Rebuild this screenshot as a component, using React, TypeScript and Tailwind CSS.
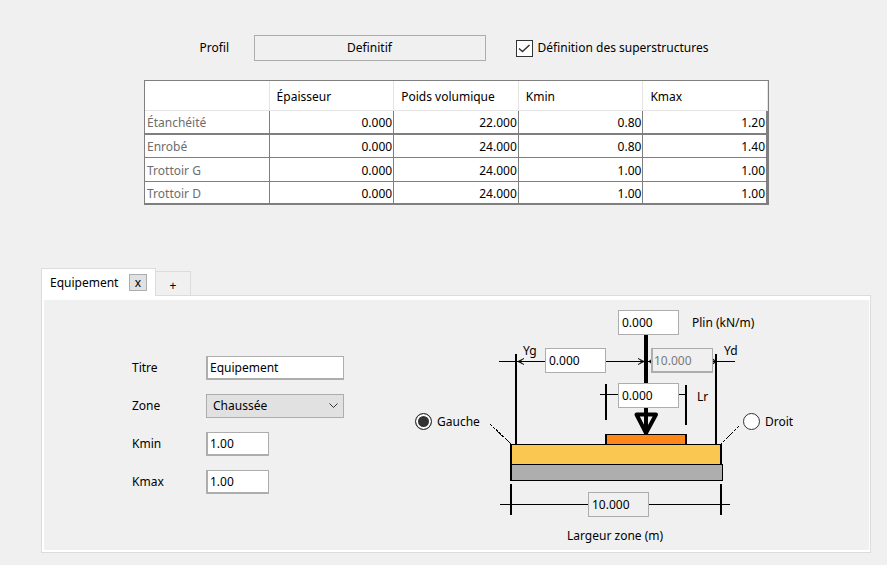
import { useState } from 'react';

const columns = ['Épaisseur', 'Poids volumique', 'Kmin', 'Kmax'];

const rows = [
  { name: 'Étanchéité', size: 'h-6', line: 'border-b-2', values: ['0.000', '22.000', '0.80', '1.20'] },
  { name: 'Enrobé', size: 'h-[23px]', line: 'border-b', values: ['0.000', '24.000', '0.80', '1.40'] },
  { name: 'Trottoir G', size: 'h-6', line: 'border-b', values: ['0.000', '24.000', '1.00', '1.00'] },
  { name: 'Trottoir D', size: 'h-[21px]', line: '', values: ['0.000', '24.000', '1.00', '1.00'] },
];

const field =
  'h-6 border border-b-2 border-l-2 border-[#adadad] bg-white pl-[2px] text-black outline-none';
const canvasField =
  'absolute h-[25px] w-[61px] border border-[#adadad] bg-white pl-[3px] text-black outline-none';
const disabledCanvasField =
  'absolute h-[25px] border border-[#adadad] bg-[#f0f0f0] outline-none';
const radio =
  'm-0 size-[17px] appearance-none rounded-full border border-[#333] bg-white checked:bg-[#333] checked:shadow-[inset_0_0_0_2px_white]';

function SuperstructureTable() {
  return (
    <table className="w-[625px] table-fixed border-separate border-spacing-0 border border-b-2 border-[#7f7f7f] bg-white">
      <thead>
        <tr className="h-[30px]">
          <td className="border-r border-b border-[#e5e5e5] p-0" />
          {columns.map((c) => (
            <th
              key={c}
              scope="col"
              className="border-r border-b border-[#e5e5e5] p-0 pt-[2px] pl-[7px] text-left font-normal"
            >
              {c}
            </th>
          ))}
        </tr>
      </thead>
      <tbody>
        {rows.map((row) => (
          <tr key={row.name} className={row.size}>
            <th
              scope="row"
              className={`${row.line} border-r border-[#7f7f7f] p-0 pt-[2px] pl-[2px] text-left font-normal text-[#6d6d6d]`}
            >
              {row.name}
            </th>
            {row.values.map((v, j) => (
              <td
                key={columns[j]}
                className={`${row.line} border-r border-[#7f7f7f] p-0 pt-[2px] pr-px text-right last:border-r-2`}
              >
                {v}
              </td>
            ))}
          </tr>
        ))}
      </tbody>
    </table>
  );
}

function LoadDiagram() {
  const [side, setSide] = useState('gauche');
  return (
    <div className="relative h-[240px] w-[380px] shrink-0">
      <svg
        viewBox="414 308 380 240"
        className="absolute inset-0 size-full"
        shapeRendering="crispEdges"
        aria-hidden="true"
      >
        {/* deck layers */}
        <rect x="510" y="464" width="213" height="17" fill="#000" />
        <rect x="512" y="465" width="210" height="15" fill="#aeaeae" />
        <rect x="510" y="444" width="212" height="20" fill="#000" />
        <rect x="512" y="445" width="208" height="19" fill="#fac751" />
        <rect x="605" y="434" width="82" height="10" fill="#000" />
        <rect x="607" y="435" width="78" height="9" fill="#ff861a" />
        {/* dimension lines */}
        <g fill="#000">
          <rect x="515" y="354" width="2" height="90" />
          <rect x="715" y="354" width="2" height="90" />
          <rect x="499" y="361" width="147" height="1" />
          <rect x="648" y="361" width="87" height="1" />
          <rect x="605" y="384" width="2" height="36" />
          <rect x="685" y="385" width="2" height="40" />
          <rect x="600" y="394" width="86" height="1" />
          <rect x="510" y="484" width="2" height="31" />
          <rect x="720" y="484" width="2" height="31" />
          <rect x="500" y="504" width="230" height="1" />
          <rect x="644" y="334" width="4" height="84" />
        </g>
        <g stroke="#000" fill="none" shapeRendering="auto">
          <path d="M524 358.500L518 361.500L524 364.500M521 360V363" />
          <path d="M638 358.500L644 361.500L638 364.500M641 360V363" />
          <path d="M652 359L649 361.500L652 364M651 360V363" />
          <path d="M713 359L716 361.500L713 364M714 360V363" />
          <path d="M646 412V434" strokeWidth="4" />
          <path d="M636.500 414.500H656L646 433Z" strokeWidth="4" strokeLinejoin="round" />
        </g>
        <g stroke="#000" fill="none" strokeDasharray="3 1">
          <path d="M490 424L511 444" />
          <path d="M739 426L721 444" />
        </g>
      </svg>

      <input id="plin" defaultValue="0.000" className={`${canvasField} top-[2px] left-[204px]`} />
      <label htmlFor="plin" className="absolute top-[7px] left-[278px]">Plin (kN/m)</label>

      <label htmlFor="yg" className="absolute top-[35px] left-[109px]">Yg</label>
      <input id="yg" defaultValue="0.000" className={`${canvasField} top-[40px] left-[131px]`} />

      <input
        id="yd"
        defaultValue="10.000"
        disabled
        className={`${disabledCanvasField} top-[40px] left-[237px] w-[62px] border-b-2 border-l-2 pl-px text-[#7a7a7a]`}
      />
      <label htmlFor="yd" className="absolute top-[35px] left-[310px]">Yd</label>

      <input id="lr" defaultValue="0.000" className={`${canvasField} top-[75px] left-[204px]`} />
      <label htmlFor="lr" className="absolute top-[81px] left-[283px]">Lr</label>

      <label className="absolute top-[105px] left-px flex items-center gap-[5px]">
        <input
          type="radio"
          name="side"
          checked={side === 'gauche'}
          onChange={() => setSide('gauche')}
          className={radio}
        />
        Gauche
      </label>
      <label className="absolute top-[105px] left-[329px] flex items-center gap-[5px]">
        <input
          type="radio"
          name="side"
          checked={side === 'droit'}
          onChange={() => setSide('droit')}
          className={radio}
        />
        Droit
      </label>

      <input
        id="largeur"
        defaultValue="10.000"
        readOnly
        className={`${disabledCanvasField} top-[184px] left-[174px] w-[61px] pl-[3px] text-black`}
      />
      <label htmlFor="largeur" className="absolute top-[220px] left-[153px]">Largeur zone (m)</label>
    </div>
  );
}

export default function App() {
  const [defined, setDefined] = useState(true);
  return (
    <main className="min-h-screen bg-[#f0f0f0] pt-[35px] pr-4 pb-3 pl-[41px] font-['Noto_Sans','DejaVu_Sans',sans-serif] text-[12px] leading-4 text-black">
      <div className="flex items-center justify-center pr-1">
        <span id="profil" className="w-[54px]">Profil</span>
        <button aria-describedby="profil" className="h-[26px] w-[232px] border border-[#adadad]">
          Definitif
        </button>
        <label className="ml-[30px] flex items-center gap-[5px]">
          <span className="relative flex">
            <input
              type="checkbox"
              checked={defined}
              onChange={(e) => setDefined(e.target.checked)}
              className="peer m-0 size-[17px] appearance-none border border-[#333] bg-white"
            />
            <svg
              viewBox="0 0 17 17"
              className="pointer-events-none absolute inset-0 hidden size-[17px] peer-checked:block"
              fill="none"
              stroke="#333"
              strokeWidth="1.500"
            >
              <path d="M3 8.500L6.500 11.500L13.500 5" />
            </svg>
          </span>
          Définition des superstructures
        </label>
      </div>

      <div className="mt-[19px] flex justify-center pl-px">
        <SuperstructureTable />
      </div>

      <section className="mt-[63px]">
        <div className="flex items-end">
          <div className="relative z-10 -mb-px flex h-7 w-[115px] items-center border border-b-0 border-[#dcdcdc] bg-white pl-2">
            <button className="w-[79px] text-left">Equipement</button>
            <button
              aria-label="Fermer Equipement"
              className="flex h-[17px] w-[18px] items-center justify-center border border-[#adadad] bg-[#e1e1e1] leading-3"
            >
              x
            </button>
          </div>
          <button className="h-6 w-[35px] border border-b-0 border-l-0 border-[#dcdcdc] pt-1">+</button>
        </div>
        <div className="border border-[#dcdcdc] bg-white pt-1 pr-px pb-[2px] pl-[2px]">
          <div className="flex gap-[70px] bg-[#f0f0f0] pt-2 pb-[2px] pl-[88px]">
            <form className="mt-12 grid shrink-0 grid-cols-[74px_138px] content-start items-center gap-y-[14px]">
              <label htmlFor="titre">Titre</label>
              <input id="titre" defaultValue="Equipement" className={`${field} w-[138px]`} />
              <label htmlFor="zone">Zone</label>
              <span className="relative flex">
                <select
                  id="zone"
                  className="h-6 w-[138px] appearance-none border border-[#adadad] bg-[#e1e1e1] pl-[6px] outline-none"
                >
                  <option>Chaussée</option>
                </select>
                <svg
                  viewBox="0 0 9 6"
                  className="pointer-events-none absolute top-[9px] right-[6px] h-[6px] w-[9px]"
                  fill="none"
                  stroke="#333"
                >
                  <path d="M0.500 0.500L4.500 4.500L8.500 0.500" />
                </svg>
              </span>
              <label htmlFor="kmin">Kmin</label>
              <input id="kmin" defaultValue="1.00" className={`${field} w-[63px]`} />
              <label htmlFor="kmax">Kmax</label>
              <input id="kmax" defaultValue="1.00" className={`${field} w-[63px]`} />
            </form>
            <LoadDiagram />
          </div>
        </div>
      </section>
    </main>
  );
}
